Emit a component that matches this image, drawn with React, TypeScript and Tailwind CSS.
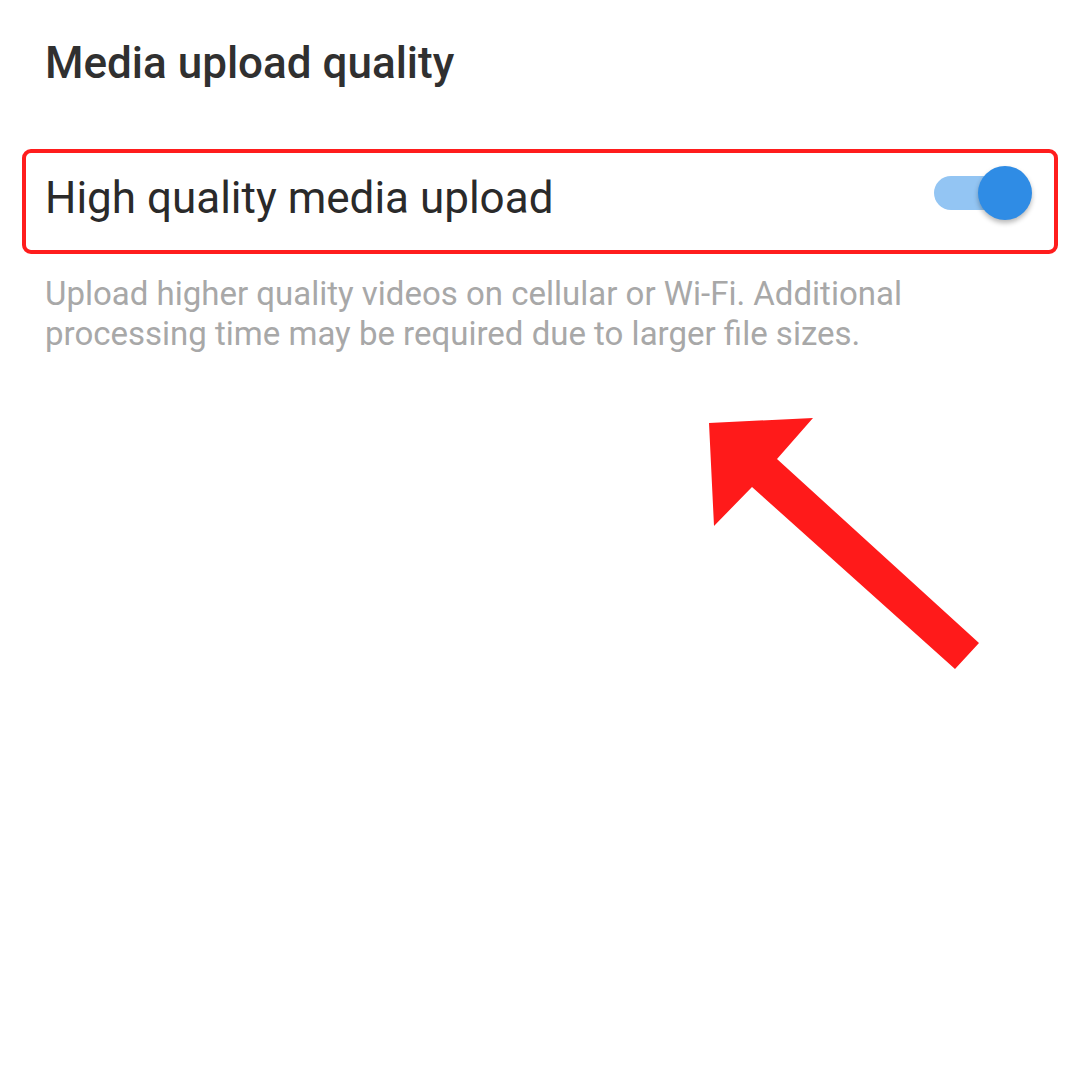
import { ReactNode } from "react"

// Settings page snippet: one toggle row, highlighted with a red box, and an arrow pointing at it.

function Toggle({ on }: { on: boolean }) {
  return (
    <div className="relative h-[54px] w-[100px] shrink-0">
      <div
        className={`absolute left-[2px] top-[10px] h-[34px] w-[68px] rounded-full ${
          on ? "bg-[#93c5f3]" : "bg-[#c7c7c7]"
        }`}
      />
      <div
        className={`absolute top-0 h-[54px] w-[54px] rounded-full shadow-[0_3px_5px_rgba(0,0,0,0.28)] ${
          on ? "left-[46px] bg-[#2f8ce5]" : "left-0 bg-[#f1f1f1]"
        }`}
      />
    </div>
  )
}

function Highlight({ children }: { children: ReactNode }) {
  return (
    <div className="mx-[22px] rounded-[9px] border-[4px] border-[#ff1d1d]">{children}</div>
  )
}

function Arrow() {
  return (
    <svg
      className="absolute left-0 top-0"
      width="1080"
      height="1080"
      viewBox="0 0 1080 1080"
    >
      <polygon
        points="709,423 813,418 777,459 979,643 955,669 752,487 714,526"
        fill="#ff1a1a"
      />
    </svg>
  )
}

export default function App() {
  return (
    <div className="relative h-[1080px] w-[1080px] overflow-hidden bg-white font-['Roboto',sans-serif]">
      <div className="pt-[36px]">
        <h1 className="pl-[45px] text-[44px] font-medium leading-[54px] text-[#303030]">
          Media upload quality
        </h1>

        <div className="mt-[59px]">
          <Highlight>
            <div className="flex h-[97px] items-center justify-between pl-[19px] pr-[22px]">
              <span className="-mt-[8px] text-[44px] leading-none text-[#2a2a2a]">
                High quality media upload
              </span>
              <div className="-mt-[18px]">
                <Toggle on />
              </div>
            </div>
          </Highlight>
        </div>

        <p className="mt-[20px] w-[920px] pl-[45px] text-[33px] leading-[40px] text-[#a8a8a8]">
          Upload higher quality videos on cellular or Wi-Fi. Additional processing time may be
          required due to larger file sizes.
        </p>
      </div>

      <Arrow />
    </div>
  )
}
